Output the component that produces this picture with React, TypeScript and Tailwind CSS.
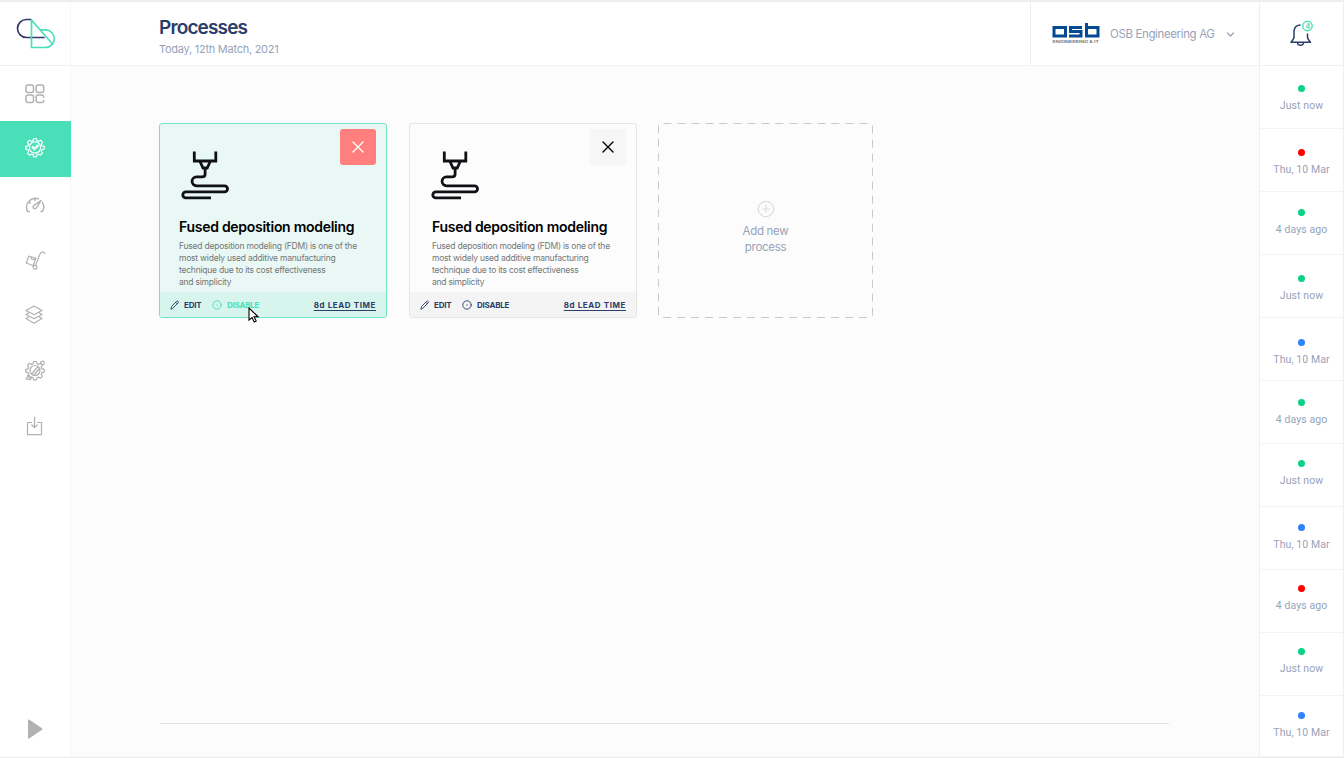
import type { ReactNode } from "react";

const GearPath = "M8.6 1.5h2.8l.5 2.2 1.6.7 2-1.2 2 2-1.2 2 .7 1.6 2.2.5v2.8l-2.2.5-.7 1.6 1.2 2-2 2-2-1.2-1.6.7-.5 2.2H8.6l-.5-2.2-1.6-.7-2 1.2-2-2 1.2-2-.7-1.6-2.2-.5V9.300l2.200-.5.7-1.600-1.200-2 2-2 2 1.200 1.600-.7z";

function Svg({ w, h, children, sw = 1 }: { w: number; h: number; children: ReactNode; sw?: number }) {
  return (
    <svg width={w} height={h} viewBox={`0 0 ${w} ${h}`} fill="none" stroke="currentColor" strokeWidth={sw} strokeLinecap="round" strokeLinejoin="round" className="shrink-0">
      {children}
    </svg>
  );
}

function Logo() {
  return (
    <Svg w={40} h={32} sw={1.7}>
      <g stroke="#33386c">
        <path d="M15 1.500H10.500a9 9 0 0 0 0 18H28" />
      </g>
      <g stroke="#49dfb9">
        <path d="M15.500 2v27.500H29.500a8.800 8.800 0 0 0 0-17.600h-5M15.500 2l21 24" />
      </g>
    </Svg>
  );
}

function NavIcon({ name }: { name: string }) {
  switch (name) {
    case "grid":
      return (
        <Svg w={20} h={20} sw={1.5}>
          <rect x="1" y="1" width="7.500" height="7.500" rx="2" />
          <rect x="11.200" y="1" width="7.500" height="7.500" rx="2" />
          <rect x="1" y="11" width="7.500" height="7.500" rx="2" />
          <path d="M18.700 13a2 2 0 0 0-2-2h-3.500a2 2 0 0 0-2 2v3.500a2 2 0 0 0 2 2h3.500a2 2 0 0 0 2-2" />
        </Svg>
      );
    case "gear":
      return (
        <Svg w={21} h={21} sw={1.2}>
          <path d={GearPath} />
          <circle cx="10" cy="10.500" r="5.600" />
          <path d="M7 10.500l1-1 1.500 1.300 3-3 1 1-4 4z" />
        </Svg>
      );
    case "gauge":
      return (
        <Svg w={20} h={18} sw={1.4}>
          <path d="M4.300 15.500H2.700a9 9 0 0 1 10.800-12.700M17.500 6.500a9 9 0 0 1 0 9H16M10 2v2.500M3.500 6l1.800 1.200M16 4.500l-4.500 7.200a1.800 1.800 0 1 1-2.500-2.400z" />
        </Svg>
      );
    case "trolley":
      return (
        <Svg w={21} h={19} sw={1.2}>
          <path d="M20 2.300c-2-1.700-4.300-1.600-5 .7L10.700 14M.8 11.800l8 3.200M3.800 5l7 2.300-2.400 6.700M3.800 5l-2.300 6.500M6.600 6l-.6 1.800 2.800.9.600-1.700" />
          <circle cx="10" cy="16.200" r="1.900" />
        </Svg>
      );
    case "layers":
      return (
        <Svg w={18} h={20} sw={1.2}>
          <path d="M9 1l8 4.500L9 9.700 1 5.500zM3.500 8L1 9.500l8 4.200 8-4.200L14.500 8M3.500 12L1 13.500l8 4.700 8-4.700L14.500 12" />
        </Svg>
      );
    case "gear-wrench":
      return (
        <Svg w={21} h={21} sw={1.2}>
          <path d={GearPath} />
          <circle cx="10" cy="10.500" r="5" />
          <path d="M7 13.500l6-7M9 15l6-7M1 19l2.500-4 3 3-1.500 1.700z" />
          <circle cx="17.500" cy="3" r="1.800" />
        </Svg>
      );
    default:
      return (
        <Svg w={18} h={20} sw={1.2}>
          <path d="M5.500 6.500h-4v12.200h14V6.500h-4M8.500 1v10.500M5.800 9l2.700 2.700L11.200 9" />
        </Svg>
      );
  }
}

const nav = [
  ["grid", "h-[55px] text-[#b1b1b1]"],
  ["gear", "h-14 bg-[#49dfb9] text-white pb-[3px]"],
  ["gauge", "h-14 pb-px text-[#b1b1b1]"],
  ["trolley", "h-14 pb-px text-[#b1b1b1]"],
  ["layers", "h-[53px] pb-[2px] pr-[2px] text-[#b1b1b1]"],
  ["gear-wrench", "h-[58px] pb-px text-[#b1b1b1]"],
  ["download", "h-[53px] pb-px text-[#b1b1b1]"],
];

function Printer() {
  return (
    <svg width="49" height="50" viewBox="0 0 49 50" fill="none" stroke="#101114" strokeWidth="2.800" className="block">
      <path d="M13.300 .5v9.500h21.500V.5M19 10.500l3 6.500h4.200l3-6.500M24.100 17v6q0 2.900-3 2.900h-5.600a4.300 4.300 0 0 0 0 8.900H43.500a3 3 0 0 1 0 6.100H4.800a2.900 2.900 0 0 0 0 6H30" />
    </svg>
  );
}

function ProcessCard({ active }: { active?: boolean }) {
  return (
    <article className={`flex h-[195px] w-[228px] flex-col overflow-hidden rounded-[3px] border ${active ? "border-[#73e3c5] bg-[#e9f8f5]" : "border-[#e6e6e6] bg-[#fcfcfc]"}`}>
      <div className="flex justify-between pt-[5px] pr-[10px] pl-[21px]">
        <div className="pt-[22px]"><Printer /></div>
        <button className={`flex size-9 items-center justify-center rounded-[3px] ${active ? "bg-[#ff7f7f] text-white" : "bg-[#f6f6f6] text-black"}`}>
          <Svg w={12} h={12} sw={1.4}><path d="M1 1l10 10M11 1L1 11" /></Svg>
        </button>
      </div>
      <h2 className={`mt-[16px] text-[14px] leading-5 font-semibold tracking-[-0.280px] whitespace-nowrap text-black ${active ? "ml-[19px]" : "ml-[22px]"}`}>Fused deposition modeling</h2>
      <p className={`mt-[3px] text-[8.500px] leading-3 tracking-[-0.220px] whitespace-nowrap text-[#737777] ${active ? "ml-[19px]" : "ml-[22px]"}`}>
        Fused deposition modeling (FDM) is one of the<br />most widely used additive manufacturing<br />technique due to its cost effectiveness<br />and simplicity
      </p>
      <footer className={`mt-auto flex h-[25px] shrink-0 items-center pr-[10px] pl-[10px] text-[8px] font-bold text-[#2b3d69] ${active ? "bg-[#d7f5ed]" : "bg-[#f4f4f4]"}`}>
        <Svg w={10} h={10} sw={0.9}><path d="M1 9l.6-2.600 5-5q.7-.7 1.500 0 .8.8 0 1.500l-5 5zM5.700 2.300l1.500 1.500" /></Svg>
        <span className="ml-[4px] w-[18px] tracking-[-0.200px]">EDIT</span>
        <span className={`ml-[10px] flex items-center gap-[5px] ${active ? "text-[#49dfb9]" : ""}`}>
          <Svg w={10} h={10} sw={0.9}><circle cx="5" cy="5" r="4.200" /><path d="M4.700 5h.6" /></Svg>
          <span className="tracking-[-0.220px]">DISABLE</span>
        </span>
        <span className="ml-auto tracking-[0.600px] whitespace-nowrap underline underline-offset-[1.500px]">8d LEAD TIME</span>
      </footer>
    </article>
  );
}

const events = [
  ["Just now", "bg-[#0cd286]", "h-[63px] pt-[19px]"],
  ["Thu, 10 Mar", "bg-[#ff0000]", "h-[63px] pt-[20px]"],
  ["4 days ago", "bg-[#0cd286]", "h-[63px] pt-[17px]"],
  ["Just now", "bg-[#0cd286]", "h-[63px] pt-[20px]"],
  ["Thu, 10 Mar", "bg-[#3180ff]", "h-[63px] pt-[21px]"],
  ["4 days ago", "bg-[#0cd286]", "h-[63px] pt-[18px]"],
  ["Just now", "bg-[#0cd286]", "h-[63px] pt-[16px]"],
  ["Thu, 10 Mar", "bg-[#3180ff]", "h-[63px] pt-[17px]"],
  ["4 days ago", "bg-[#ff0000]", "h-[63px] pt-[15px]"],
  ["Just now", "bg-[#0cd286]", "h-[63px] pt-[15px]"],
  ["Thu, 10 Mar", "bg-[#3180ff]", "h-[61px] pt-[16px]"],
];

export default function App() {
  return (
    <div className="relative flex h-[758px] w-[1344px] overflow-hidden border-t-2 border-b border-t-[#eeeeee] border-b-[#ebebeb] bg-[#fcfcfc] font-[Inter,sans-serif]">
      <aside className="flex w-[71px] shrink-0 flex-col border-r border-[#f6f6f6] bg-white">
        <div className="flex h-16 items-center justify-center border-b border-[#f0f0f0] pt-px pl-px"><Logo /></div>
        <nav className="flex flex-col">
          {nav.map(([name, style]) => (
            <a key={name} className={`flex items-center justify-center ${name === "gear" ? "-mr-px" : ""} ${style}`}><NavIcon name={name} /></a>
          ))}
        </nav>
        <button className="mt-auto mb-[18px] ml-7 w-4 text-[#b1b1b1]">
          <svg width="15" height="20" viewBox="0 0 15 20" fill="currentColor"><path d="M0 1.500Q.2.200 1.500.8L14 9.200q1 .8 0 1.600L1.500 19.200Q.2 19.800 0 18.500z" /></svg>
        </button>
      </aside>

      <main className="flex min-w-0 flex-1 flex-col">
        <header className="flex h-16 shrink-0 border-b border-[#f0f0f0] bg-white">
          <div className="flex-1 pt-[14px] pl-[88px]">
            <h1 className="text-[19px] leading-6 font-semibold tracking-[-0.850px] text-[#2b3d69]">Processes</h1>
            <p className="mt-px text-[11px] leading-4 tracking-[-0.260px] text-[#97a2ba]">Today, 12th Match, 2021</p>
          </div>
          <div className="flex w-[229px] items-center border-l border-[#f0f0f0] pl-[21px] text-[#97a2ba]">
            <svg width="48" height="22" viewBox="0 0 48 22">
              <g fill="none" stroke="#064a94" strokeWidth="3">
                <path d="M2 4.500h11.500v8.500H2zM30 4.500H18.500v4H29V13H17M34.500 0v13H46V4.500H34.500" />
              </g>
              <text x="0.500" y="20.300" fontSize="3.800" fontWeight="700" fill="#777d85" textLength="46.500" lengthAdjust="spacingAndGlyphs">ENGINEERING &amp; IT</text>
            </svg>
            <span className="ml-[10px] w-[105px] pt-[2px] text-[11.500px] tracking-[-0.370px] whitespace-nowrap">OSB Engineering AG</span>
            <span className="ml-[11px] pt-[2px]"><Svg w={9} h={7} sw={1.2}><path d="M1.500 2l3 3 3-3" /></Svg></span>
          </div>
        </header>
        <section className="flex pt-[57px] pl-[88px]">
          <ProcessCard active />
          <div className="ml-[22px]"><ProcessCard /></div>
          <button className="relative ml-[21px] flex h-[195px] w-[215px] flex-col items-center pt-[77px] text-[#97a2ba]">
            <svg className="absolute inset-0" width="215" height="195" fill="none"><rect x=".5" y=".5" width="214" height="194" rx="2" stroke="#c9c9c9" strokeDasharray="8 6" strokeDashoffset="-3" /></svg>
            <span className="h-[18px] text-[#dcdcdc]"><Svg w={18} h={18} sw={1.2}><circle cx="9" cy="9" r="7.700" /><path d="M9 5.500v7M5.500 9h7" /></Svg></span>
            <span className="mt-[6px] text-[11.500px] leading-[15.500px] tracking-[-0.300px]">Add new<br />process</span>
          </button>
        </section>
        <div className="mt-auto mr-[90px] mb-[33px] ml-[89px] h-px bg-[#e5e5e5]" />
      </main>

      <aside className="flex w-[85px] shrink-0 flex-col border-x border-[#efefef] bg-white">
        <div className="flex h-16 shrink-0 items-center justify-center border-b border-[#f0f0f0] pr-[2px]">
          <svg width="26" height="28" viewBox="0 0 26 28" fill="none" stroke="#2b3d69" strokeWidth="1.500" strokeLinecap="round" strokeLinejoin="round">
            <path d="M12 5C7.500 5.300 6 8.300 6 12v5q0 2-3 5.200h19.500q-3-3.200-3-5.200v-3M9.500 23c.5 3 5.500 3 6 0" />
            <circle cx="19.500" cy="6" r="4.700" stroke="#49dfb9" strokeWidth="1.400" />
            <text x="17.400" y="8.500" fontSize="7" fontWeight="700" fill="#49dfb9" stroke="none">4</text>
          </svg>
        </div>
        {events.map(([label, color, spacing], i) => (
          <div key={i} className={`flex shrink-0 flex-col items-center border-b border-[#f3f3f3] font-[Roboto,sans-serif] ${spacing}`}>
            <span className={`size-[7px] shrink-0 rounded-full ${color}`} />
            <span className="mt-[6px] text-[10.500px] leading-4 tracking-[0.100px] whitespace-nowrap text-[#97a2ba]">{label}</span>
          </div>
        ))}
      </aside>

      <svg className="absolute top-[305px] left-[248px]" width="12" height="17" viewBox="0 0 12 17" fill="white" stroke="black" strokeWidth="1.100">
        <path d="M1 1v12l3-2.500L6.200 15l2-.9L6 9.800h4z" />
      </svg>
    </div>
  );
}
